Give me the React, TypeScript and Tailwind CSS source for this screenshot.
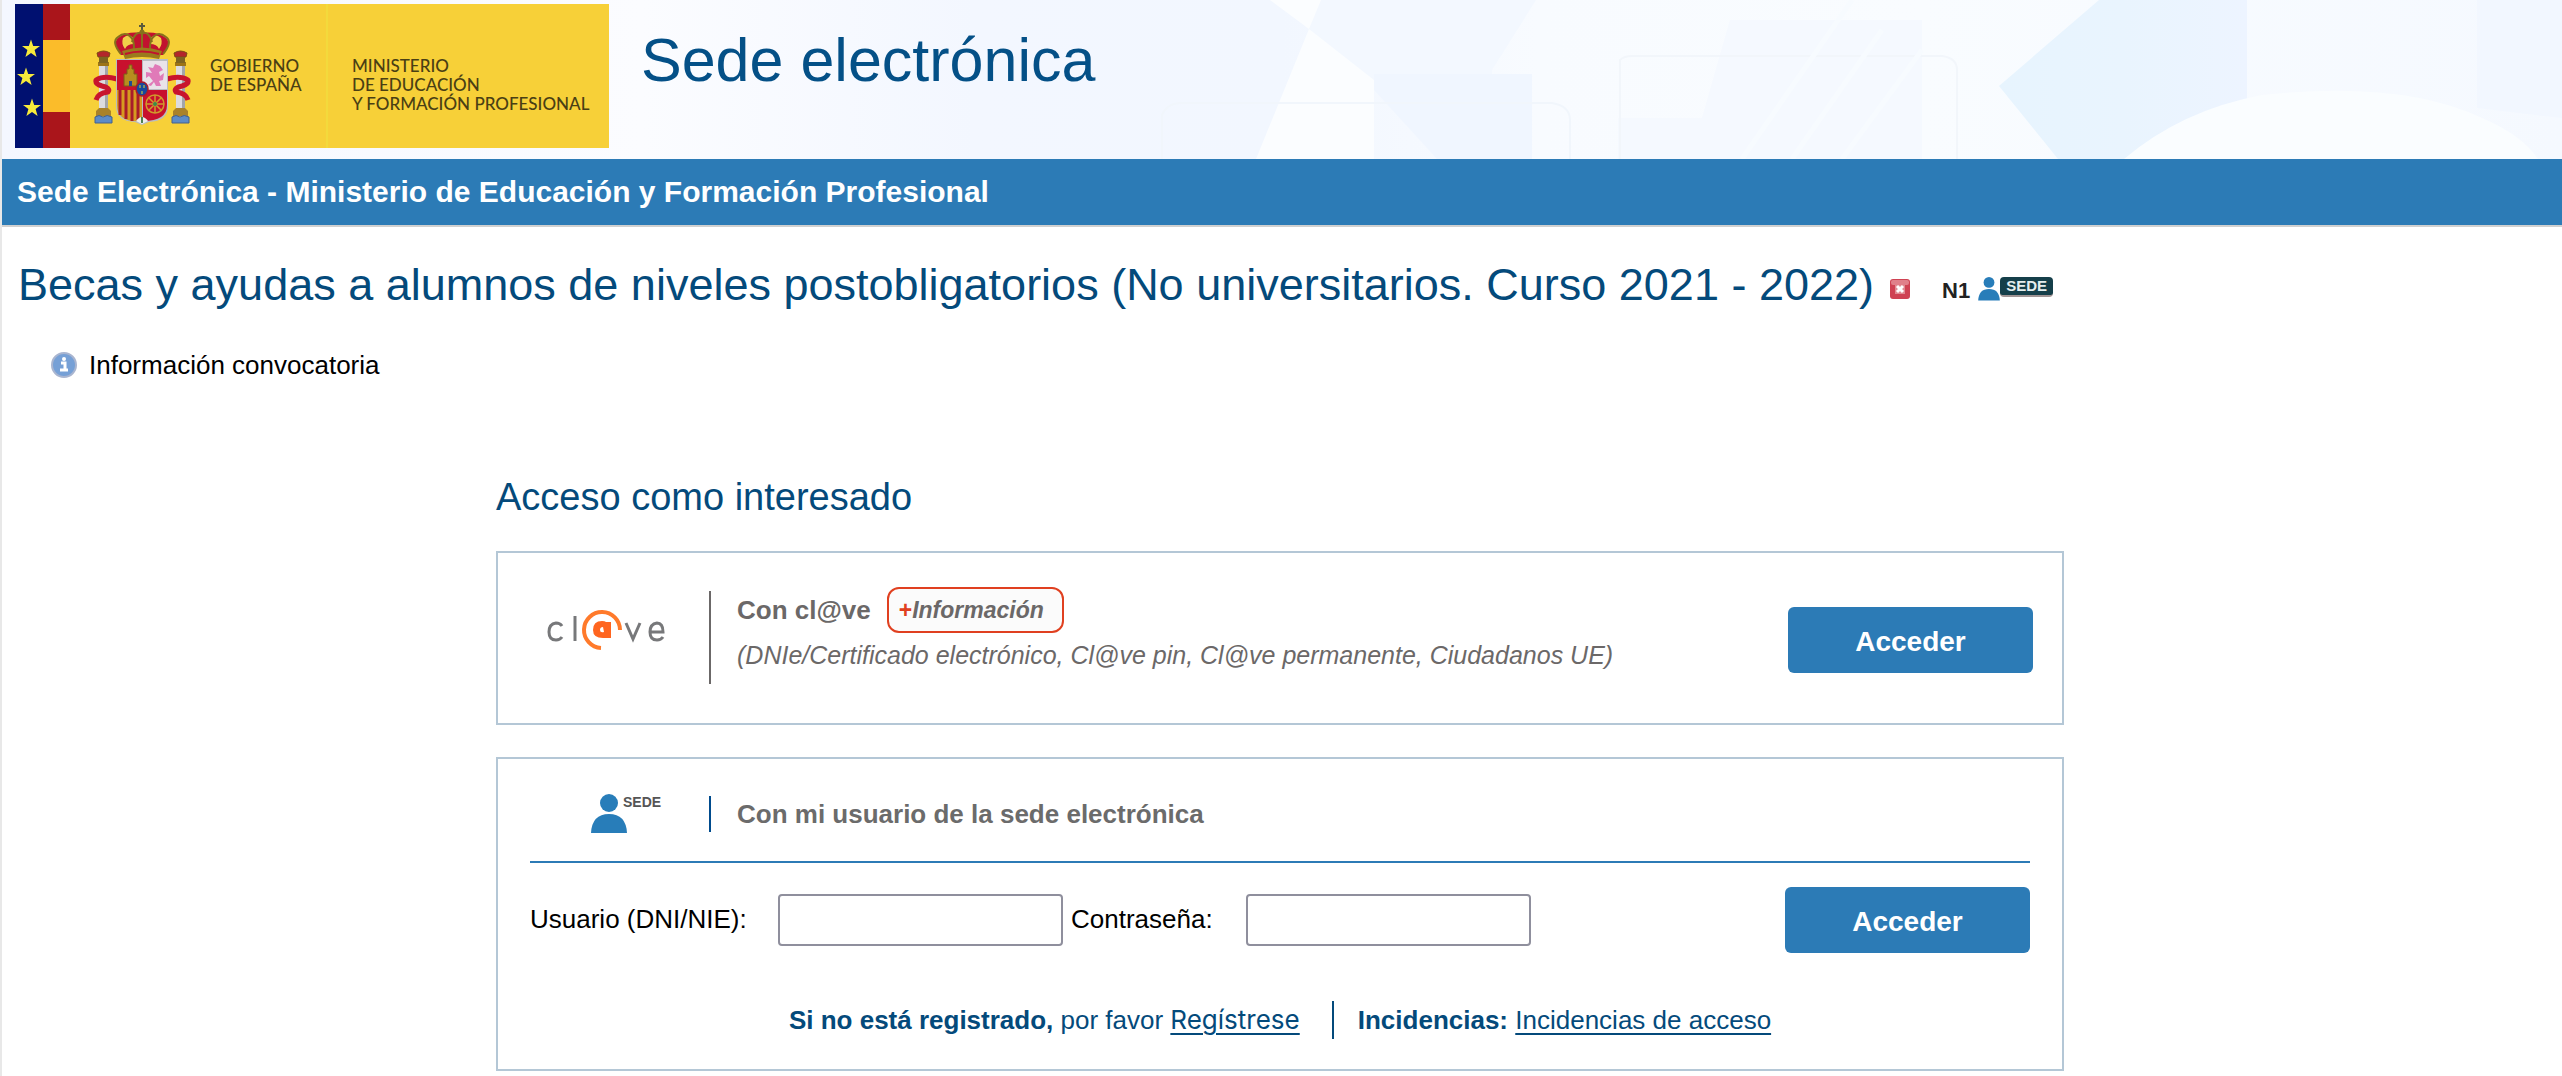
import { ReactNode } from 'react'

function StateEmblem() {
  return (
    <svg viewBox="0 0 100 104" className="h-[104px] w-[100px] shrink-0" aria-hidden="true">
      {/* columns */}
      {[3, 80].map((x) => (
        <g key={x}>
          <rect x={x + 4} y="33" width="9" height="55" fill="#dcdce0" />
          <rect x={x + 10} y="33" width="3" height="55" fill="#a3a5aa" />
          <rect x={x + 3} y="40" width="11" height="4" fill="#9c7416" />
          <path d={`M${x + 3} 35l-1-4q6.500-4 13 0l-1 4z`} fill="#b3262b" stroke="#7c4a14" />
          <rect x={x + 4} y="35" width="9" height="6" fill="#7c6420" />
          <path d={`M${x + 1} 94v-5l3-3h9l3 3v5z`} fill="#a9822a" />
          <path d={`M${x} 101v-6q4-3 8 0q4-3 9 0v6z`} fill="#5c8cc8" stroke="#44608c" />
        </g>
      ))}
      {/* ribbons */}
      <g fill="none" stroke="#c8142e" strokeWidth="5" strokeLinejoin="round">
        <path d="M25 57Q12 53 4 58Q3 62 10 64Q19 66 16 70Q6 71 4 78" />
        <path d="M75 57Q88 53 96 58Q97 62 90 64Q81 66 84 70Q94 71 96 78" />
      </g>
      {/* crown */}
      <path d="M29 33q-9-11-3-17q9-7 24-5q15-2 24 5q6 6-3 17z" fill="#c1122f" />
      <path d="M31 16q5-5 11 0v6q-7 0-9 5q-4-5-2-11zM69 16q-5-5-11 0v6q7 0 9 5q4-5 2-11z" fill="#f1cf4a" />
      <g fill="none" stroke="#86701c" strokeWidth="2">
        <path d="M29 32q-10-12-3-17q9-7 15 3q2 8 0 13" />
        <path d="M71 32q10-12 3-17q-9-7-15 3q-2 8 0 13" />
        <path d="M40 20q3-11 10-9q7-2 10 9" />
        <path d="M50 11v18" />
      </g>
      <path d="M50 1v10M47 4h6" stroke="#5b5a3c" strokeWidth="2" />
      <circle cx="50" cy="10" r="2.500" fill="#86701c" />
      <path d="M30 29q20-7 40 0l-3 8q-17-4-34 0z" fill="#9a7a1d" />
      <path d="M33 32q17-5 34 0" fill="none" stroke="#c1122f" strokeWidth="2" />
      {/* shield */}
      <path d="M24 37h52v47q0 15-19 16l-7 3l-7-3q-19-1-19-16z" fill="#b9bcbf" />
      <path d="M25 38h25v30H25z" fill="#c8102e" />
      <path d="M51 39h24v28H51z" fill="#e9e3e9" />
      <path d="M25 68h25v31q-25 2-25-16z" fill="#d69a20" />
      <path d="M28 68v25M34 68v29M40 68v31M46 68v31" stroke="#a81c2a" strokeWidth="3" />
      <path d="M51 68h24v15q0 16-24 16z" fill="#c8102e" />
      <path d="M32 64V52h3v-5h2v-4h3v4h2v5h3v12z" fill="#b78d1f" stroke="#7c5c18" />
      <path d="M37 64v-5h3v5z" fill="#1f4b8f" />
      <path
        d="M56 63l5-4l-4-5l-3 2v-6l6 1l-4-6l5 1l2-4l5 2l3 4l-4 2l1 4l4-3l-1 7l-4 1l2 5h-5l-2-4l-3 4z"
        fill="#e07ab8"
      />
      <g fill="none" stroke="#cf9a2c" strokeWidth="1.500">
        <circle cx="63" cy="82" r="9" />
        <path d="M63 73v18M54 82h18M57 76l12 12M69 76L57 88" />
      </g>
      <circle cx="63" cy="82" r="2" fill="#3b8a4b" />
      <ellipse cx="50" cy="67" rx="6" ry="7" fill="#174a9c" stroke="#a81c2a" strokeWidth="1.500" />
      <path d="M48 63v3M52 63v3M50 69v3" stroke="#9aa65a" strokeWidth="1.500" />
      <path d="M44 99q6-8 12 0l-6 3z" fill="#eceeec" />
      <path d="M50 95v6" stroke="#4d8052" strokeWidth="2" />
    </svg>
  )
}

function FlagStripes() {
  return (
    <svg viewBox="0 0 55 144" className="h-36 w-[55px] shrink-0" aria-hidden="true">
      <rect width="28" height="144" fill="#001070" />
      <rect x="28" width="27" height="144" fill="#aa151b" />
      <rect x="28" y="36" width="27" height="72" fill="#fbbc2a" />
      {[
        [16, 45],
        [11, 73],
        [17, 104],
      ].map(([x, y]) => (
        <path
          key={y}
          transform={`translate(${x} ${y})`}
          d="M0-9.500L2.200-3H9L3.600 1.100L5.600 8L0 3.900L-5.600 8L-3.600 1.100L-9-3H-2.200Z"
          fill="#f7ea3b"
        />
      ))}
    </svg>
  )
}

function HeaderBackdrop() {
  return (
    <svg
      viewBox="0 0 2560 159"
      preserveAspectRatio="none"
      className="absolute inset-0 h-full w-full"
      aria-hidden="true"
    >
      <defs>
        <linearGradient id="sky" x1="0" x2="1" y1="0" y2="0">
          <stop offset="0" stopColor="#f4f7ff" />
          <stop offset="0.250" stopColor="#fbfcff" />
          <stop offset="0.380" stopColor="#f3f7ff" />
          <stop offset="0.500" stopColor="#f2f7ff" />
          <stop offset="0.600" stopColor="#f8fbff" />
          <stop offset="0.750" stopColor="#f9fcff" />
          <stop offset="1" stopColor="#f5f9ff" />
        </linearGradient>
        <linearGradient id="glass" x1="0" x2="1" y1="0" y2="0">
          <stop offset="0" stopColor="#e7f4fe" />
          <stop offset="0.500" stopColor="#e9f4fe" />
          <stop offset="1" stopColor="#edf4ff" />
        </linearGradient>
      </defs>
      <rect width="2560" height="159" fill="url(#sky)" />
      <path d="M1316 0H1534L1490 70V159H1435L1372 80L1307 29Z" fill="#f3f8ff" />
      <path d="M1268 0L1307 29L1319 0ZM1307 29L1254 159H1372V80Z" fill="#fbfdff" />
      <path d="M1372 74H1530V159H1435L1372 90Z" fill="#f0f6ff" />
      <path d="M1160 159V115Q1165 103 1180 103H1550Q1568 106 1568 120V159" fill="none" stroke="#f1f6fc" strokeWidth="2" />
      <path d="M1728 20H1920V159H1616V118H1700Z" fill="#f5f9ff" />
      <path d="M1618 159V60Q1622 56 1630 56H1940Q1955 58 1955 70V159" fill="none" stroke="#f2f6fb" strokeWidth="2" />
      <path d="M1850 0L1740 159M1880 30L1790 159M1920 50L1840 159" stroke="#f7fbff" strokeWidth="5" />
      <path d="M2097 0H2245V118L2162 159H2056L1997 86Z" fill="url(#glass)" />
      <path d="M2122 159Q2180 110 2260 95Q2400 80 2480 118Q2520 135 2536 159Z" fill="#fafdff" />
      <path d="M2475 0H2560V118L2475 108Z" fill="#f2f7ff" />
    </svg>
  )
}

function ClaveLogo() {
  return (
    <svg viewBox="0 0 120 42" className="h-[42px] w-[120px]" role="img" aria-label="cl@ve">
      <g fill="none" stroke="#77787a" strokeWidth="3">
        <path d="M15 17Q13 14 9 14Q2 15 2 23Q2 31 9 31Q13 31 15 28" />
        <path d="M28 7v25" />
        <path d="M79 14l7 16l7-16" />
        <path d="M103 23h13Q116 14 110 14Q103 15 103 23Q103 31 110 31Q114 31 116 28" />
      </g>
      <path d="M73 21A18 18 0 1 0 54 39" fill="none" stroke="#ff7a2b" strokeWidth="4" />
      <path
        fillRule="evenodd"
        d="M64 13V29H56Q46 29 46 21Q46 12 55 12Q58 12 59 13ZM56 18Q53 18 53 21Q53 24 57 23Z"
        fill="#ff651f"
      />
    </svg>
  )
}

function UserFigure({ className }: { className: string }) {
  return (
    <svg viewBox="0 0 36 40" className={className} fill="#287db9" aria-hidden="true">
      <circle cx="18" cy="9" r="9" />
      <path d="M0 39Q1 20 18 20Q35 20 36 39Z" />
    </svg>
  )
}

function CloseBadge() {
  return (
    <svg viewBox="0 0 20 20" className="h-5 w-5" aria-hidden="true">
      <rect width="20" height="20" rx="3" fill="#cf4253" />
      <rect x="1" y="1" width="18" height="5" rx="2" fill="#e0808a" />
      <path d="M5 6h10v9H5z" fill="#e08a92" />
      <path d="M7 7l6 6M13 7l-6 6" stroke="#fff" strokeWidth="3" />
    </svg>
  )
}

function InfoBadge() {
  return (
    <svg viewBox="0 0 26 26" className="h-[26px] w-[26px]" aria-hidden="true">
      <circle cx="13" cy="13" r="12" fill="#76a0d6" stroke="#a9b5d0" strokeWidth="2" />
      <circle cx="13" cy="7" r="2" fill="#fff" />
      <path d="M10 11h4v7M9 18h8" fill="none" stroke="#fff" strokeWidth="3" />
    </svg>
  )
}

function Card({ children, className }: { children: ReactNode; className: string }) {
  return <section className={`border-2 border-[#b4c7d6] ${className}`}>{children}</section>
}

function AccessButton({ className }: { className?: string }) {
  return (
    <button
      type="submit"
      className={`h-[66px] w-[245px] rounded-md bg-[#2c7bb6] pt-1 text-[28px] font-bold text-white ${className ?? ''}`}
    >
      Acceder
    </button>
  )
}

const inputClass = 'h-[52px] w-[285px] rounded border-2 border-[#8f8f9d] bg-white px-2'

export default function App() {
  return (
    <div className="min-h-screen border-l-2 border-[#e8e8e8] bg-white font-['Liberation_Sans',Arial,sans-serif] text-[26px] leading-8 text-black">
      <header className="relative">
        <HeaderBackdrop />
        <div className="relative flex items-start gap-8 pt-1 pb-[11px] pl-[13px]">
          <div className="flex h-36 w-[594px] bg-[#f7d038] font-[Lato,sans-serif] text-[17px] leading-[19px] font-medium text-[#4a3f14]">
            <FlagStripes />
            <div className="flex w-[258px] border-r-2 border-[#f3da3c] pl-[22px]">
              <div className="pt-[18px]">
                <StateEmblem />
              </div>
              <p className="pt-[52px] pl-[18px] whitespace-nowrap">
                GOBIERNO
                <br />
                DE ESPAÑA
              </p>
            </div>
            <p className="pt-[52px] pl-6 whitespace-nowrap">
              MINISTERIO
              <br />
              DE EDUCACIÓN
              <br />
              Y FORMACIÓN PROFESIONAL
            </p>
          </div>
          <p className="pt-[22px] text-[61px] leading-[68px] text-[#045087]">Sede electrónica</p>
        </div>
      </header>

      <div className="border-b-2 border-[#d0d0d0] bg-[#2c7bb6] px-[15px] py-[15px] text-[30px] leading-9 font-bold text-white">
        Sede Electrónica - Ministerio de Educación y Formación Profesional
      </div>

      <main className="pt-8 pr-5 pl-4">
        <div className="flex items-center">
          <h1 className="text-[45px] leading-[52px] text-[#044a7b]">
            Becas y ayudas a alumnos de niveles postobligatorios (No universitarios. Curso 2021 - 2022)
          </h1>
          <a href="#cerrar" aria-label="Cerrar" className="ml-4 pt-2">
            <CloseBadge />
          </a>
          <div className="ml-8 flex items-end pt-2 text-[22px] leading-5 font-bold text-[#222]">
            <span>N1</span>
            <UserFigure className="ml-2 h-6 w-[22px]" />
            <span className="mb-1 rounded-sm border-b-2 border-[#a09494] bg-[#153f4a] px-[6px] text-[15px] leading-[18px] text-[#e6eeee]">
              SEDE
            </span>
          </div>
        </div>

        <a href="#convocatoria" className="mt-[38px] ml-[33px] flex w-fit items-center gap-3">
          <InfoBadge />
          Información convocatoria
        </a>

        <div className="mx-auto mt-[94px] max-w-[1568px]">
          <h2 className="text-[38px] leading-[44px] text-[#044a7b]">Acceso como interesado</h2>

          <Card className="mt-8 flex items-start pr-[29px] pb-[39px] pl-[49px] text-[#6b6868]">
            <div className="w-[162px] pt-14">
              <ClaveLogo />
            </div>
            <div className="mt-[38px] h-[93px] w-[2px] bg-[#6b6868]" />
            <div className="flex-1 pt-[34px] pl-[26px]">
              <div className="flex items-center gap-4">
                <b>Con cl@ve</b>
                <a
                  href="#informacion"
                  className="rounded-xl border-2 border-[#e04020] bg-[#fbfbfb] py-[5px] pr-[18px] pl-[10px] text-[23px] font-bold italic"
                >
                  <span className="text-[#e04020] not-italic">+</span>Información
                </a>
              </div>
              <p className="mt-2 text-[25px] leading-7 italic">
                (DNIe/Certificado electrónico, Cl@ve pin, Cl@ve permanente, Ciudadanos UE)
              </p>
            </div>
            <AccessButton className="mt-[54px]" />
          </Card>

          <Card className="mt-8 px-8 pb-[30px]">
            <div className="flex items-center border-b-2 border-[#2c7bb6] pt-[35px] pb-[27px]">
              <div className="flex w-[179px] items-start pl-[61px] text-[14px] leading-4 font-bold text-[#555]">
                <UserFigure className="h-10 w-9" />
                <span className="-ml-1">SEDE</span>
              </div>
              <div className="h-9 w-[2px] bg-[#004b8d]" />
              <h3 className="pl-[26px] font-bold text-[#6b6b6b]">Con mi usuario de la sede electrónica</h3>
            </div>

            <form className="mt-6 flex items-center">
              <label htmlFor="usuario" className="w-[248px] pb-0.5">
                Usuario (DNI/NIE):
              </label>
              <input id="usuario" type="text" className={inputClass} />
              <label htmlFor="clave" className="w-[183px] pb-0.5 pl-2">
                Contraseña:
              </label>
              <input id="clave" type="password" className={inputClass} />
              <AccessButton className="ml-auto" />
            </form>

            <div className="mt-12 flex items-center justify-center text-[#044a7b]">
              <p>
                <b>Si no está registrado,</b> por favor{' '}
                <a href="#registro" className="font-[Inter,sans-serif] underline decoration-2 underline-offset-4">
                  Regístrese
                </a>
              </p>
              <div className="mr-6 ml-8 h-[38px] w-[2px] bg-[#044a7b]" />
              <p>
                <b>Incidencias:</b>{' '}
                <a href="#incidencias" className="underline decoration-2 underline-offset-4">
                  Incidencias de acceso
                </a>
              </p>
            </div>
          </Card>
        </div>
      </main>
    </div>
  )
}
